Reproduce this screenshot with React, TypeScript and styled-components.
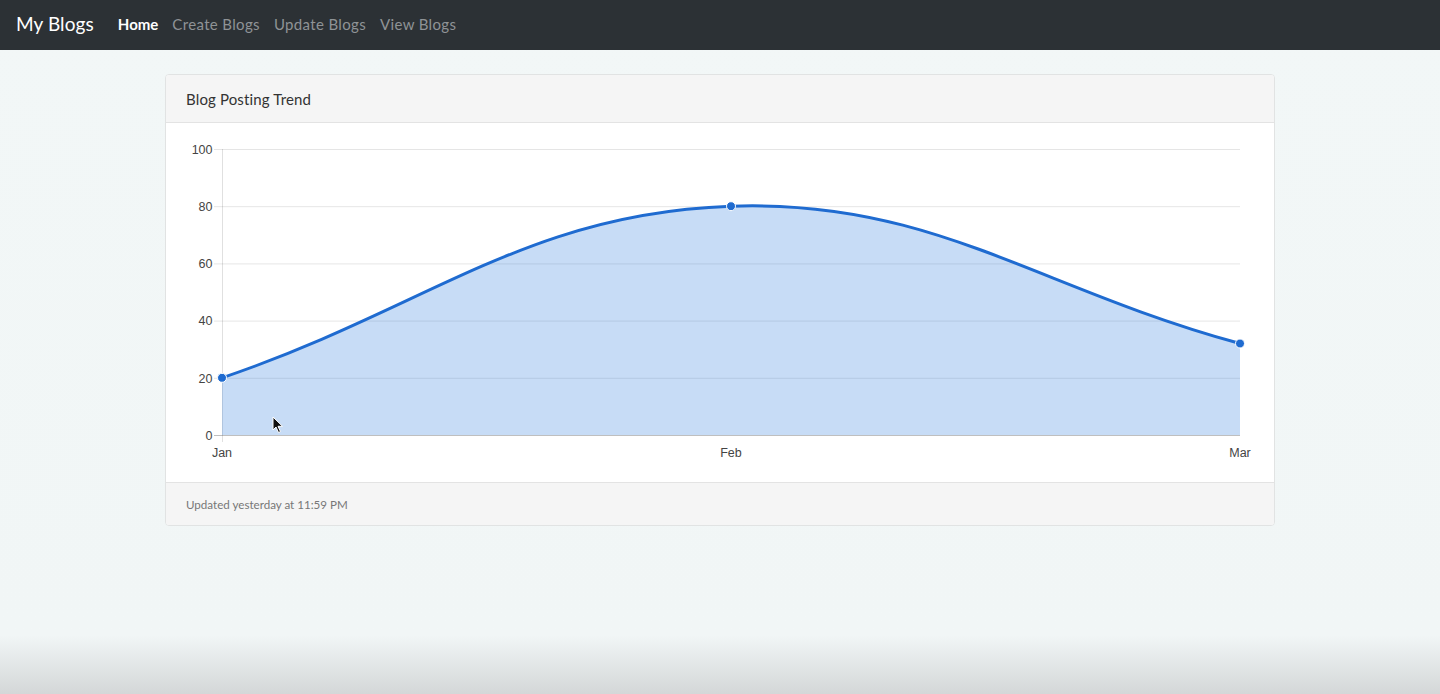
import React from "react";
import styled, { createGlobalStyle } from "styled-components";

const GlobalStyle = createGlobalStyle`
  html, body { margin: 0; padding: 0; }
  body {
    font-family: Lato, "Open Sans", sans-serif;
    background: linear-gradient(to bottom, #f2f7f7 0px, #f1f6f6 635px, #d4d7d8 694px);
    min-height: 694px;
    color: #333;
  }
`;

const Page = styled.div`
  min-height: 694px;
`;

const NavBar = styled.nav`
  height: 50px;
  background: #2c3135;
  display: flex;
  align-items: center;
  padding: 0 16px;
  box-sizing: border-box;
`;

const Brand = styled.a`
  font-size: 19px;
  color: #fff;
  margin-right: 17px;
  padding-bottom: 3px;
  letter-spacing: 0.1px;
`;

const NavLinks = styled.div`
  display: flex;
  align-items: center;
  padding-bottom: 3px;
`;

const NavLink = styled.a<{ $active?: boolean }>`
  font-size: 15px;
  padding: 0 7px;
  color: ${(p) => (p.$active ? "#ffffff" : "#8f9396")};
  font-weight: ${(p) => (p.$active ? 700 : 400)};
  letter-spacing: ${(p) => (p.$active ? "0" : "0.35px")};
`;

const Container = styled.main`
  width: 1110px;
  margin: 24px auto 0;
`;

const Card = styled.section`
  border: 1px solid #e1e3e3;
  border-radius: 4px;
  background: #fff;
  overflow: hidden;
`;

const CardHeader = styled.header`
  background: #f5f5f5;
  border-bottom: 1px solid #e3e3e3;
  height: 47px;
  display: flex;
  align-items: center;
  padding: 0 20px;
  font-size: 15px;
  letter-spacing: 0.15px;
  color: #333;
`;

const CardBody = styled.div`
  padding: 19px 20px 19px;
  position: relative;
`;

const ChartWrap = styled.div`
  position: relative;
  height: 321px;
`;

const ChartSvg = styled.svg`
  display: block;
  width: 1068px;
  height: 321px;
  font-family: "Liberation Sans", Arial, sans-serif;
`;

const Cursor = styled.svg`
  position: absolute;
  left: 86px;
  top: 274px;
  width: 12px;
  height: 18px;
`;

const CardFooter = styled.footer`
  background: #f5f5f5;
  border-top: 1px solid #e3e3e3;
  height: 42px;
  display: flex;
  align-items: center;
  padding: 0 20px;
  font-size: 11.6px;
  color: #777;
`;

const yTicks = [0, 20, 40, 60, 80, 100];
const X0 = 36;
const X1 = 1054;
const yFor = (v: number) => 293 - v * 2.86;

const linePath =
  "M36,235.8 C239.6,167.2 339.5,71.1 545,64.2 C746.7,57.1 850.4,146.2 1054,201.5";
const areaPath = linePath + " L1054,293 L36,293 Z";

const Chart: React.FC = () => (
  <ChartSvg viewBox="0 0 1068 321">
    {yTicks.map((v) => (
      <g key={v}>
        <line
          x1={28}
          x2={X1}
          y1={yFor(v) + 0.5}
          y2={yFor(v) + 0.5}
          stroke={v === 0 ? "rgba(0,0,0,0.25)" : "rgba(0,0,0,0.1)"}
          strokeWidth={1}
        />
        <text
          x={26.5}
          y={yFor(v) + 1.5}
          textAnchor="end"
          dominantBaseline="middle"
          fontSize={12.5}
          fill="#444"
        >
          {v}
        </text>
      </g>
    ))}
    <line x1={X0 + 0.5} x2={X0 + 0.5} y1={7} y2={300} stroke="rgba(0,0,0,0.12)" />
    <path d={areaPath} fill="rgba(40,118,222,0.26)" />
    <path d={linePath} fill="none" stroke="#1f6bd0" strokeWidth={3} />
    {[
      [36, 235.8],
      [545, 64.2],
      [1054, 201.5],
    ].map(([x, y]) => (
      <circle key={x} cx={x} cy={y} r={4.5} fill="#1f6bd0" stroke="#fff" strokeWidth={1} />
    ))}
    {[
      ["Jan", X0],
      ["Feb", 545],
      ["Mar", X1],
    ].map(([t, x]) => (
      <text
        key={t as string}
        x={x as number}
        y={312}
        textAnchor="middle"
        dominantBaseline="middle"
        fontSize={12.5}
        fill="#444"
      >
        {t}
      </text>
    ))}
  </ChartSvg>
);

export default function App() {
  return (
    <Page>
      <GlobalStyle />
      <NavBar>
        <Brand>My Blogs</Brand>
        <NavLinks>
          <NavLink $active>Home</NavLink>
          <NavLink>Create Blogs</NavLink>
          <NavLink>Update Blogs</NavLink>
          <NavLink>View Blogs</NavLink>
        </NavLinks>
      </NavBar>
      <Container>
        <Card>
          <CardHeader>Blog Posting Trend</CardHeader>
          <CardBody>
            <ChartWrap>
              <Chart />
              <Cursor viewBox="0 0 12 18">
                <path d="M1,1 L1,14 L4,11 L6.5,16.5 L8.5,15.6 L6,10.3 L10.5,10.3 Z" fill="#111" stroke="#fff" strokeWidth={1} />
              </Cursor>
            </ChartWrap>
          </CardBody>
          <CardFooter>Updated yesterday at 11:59 PM</CardFooter>
        </Card>
      </Container>
    </Page>
  );
}
